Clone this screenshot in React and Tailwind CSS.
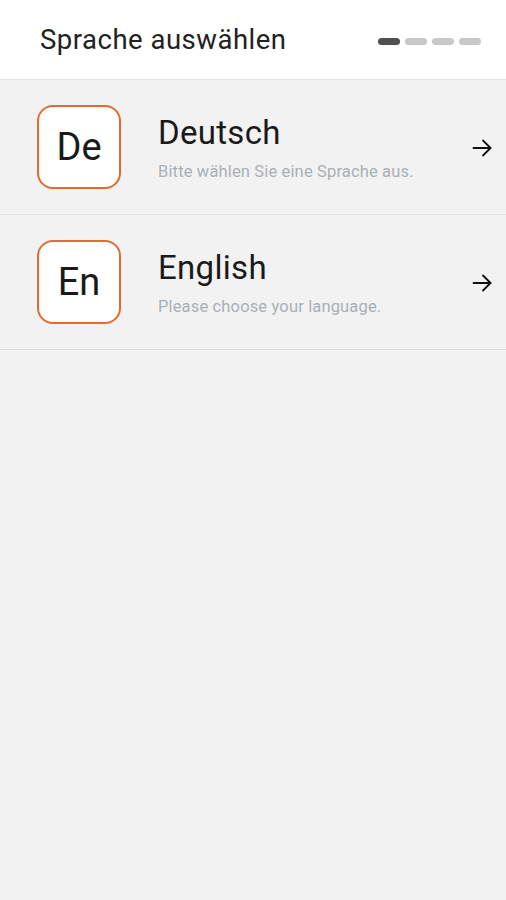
export default function App() {
  const rows = [
    { code: "De", title: "Deutsch", sub: "Bitte wählen Sie eine Sprache aus.", border: "border-[#e3e3e3]" },
    { code: "En", title: "English", sub: "Please choose your language.", border: "border-[#d6dfe6]" },
  ];
  return (
    <div className="min-h-[900px] w-full bg-[#f2f2f2]" style={{ fontFamily: "Roboto, 'Noto Sans', sans-serif" }}>
      <div className="flex h-[80px] items-center justify-between border-b border-[#e2e2e2] bg-white pl-[40px] pr-[25px]">
        <div className="text-[27.5px] leading-[30px] tracking-[0.5px] text-[#222]">Sprache auswählen</div>
        <div className="mt-[4px] flex items-center gap-[5px]">
          <span className="h-[7px] w-[22px] rounded-full bg-[#505050]"></span>
          <span className="h-[7px] w-[22px] rounded-full bg-[#c8c8c8]"></span>
          <span className="h-[7px] w-[22px] rounded-full bg-[#c8c8c8]"></span>
          <span className="h-[7px] w-[22px] rounded-full bg-[#c8c8c8]"></span>
        </div>
      </div>
      {rows.map((r) => (
        <div key={r.code} className={`flex h-[135px] items-center border-b ${r.border} pl-[37px] pr-[14px]`}>
          <div className="flex h-[84px] w-[84px] shrink-0 items-center justify-center rounded-[16px] border-2 border-[#e8692d] bg-white text-[38px] leading-none text-[#1a1a1a]">
            {r.code}
          </div>
          <div className="ml-[37px] flex flex-1 flex-col">
            <div className="mt-[2px] text-[33px] leading-[38px] tracking-[0.3px] text-[#1a1a1a]">{r.title}</div>
            <div className="mt-[10px] text-[16.5px] leading-[20px] tracking-[0.15px] text-[#a9b0b5]">{r.sub}</div>
          </div>
          <svg width="20" height="18" viewBox="0 0 20 18" fill="none" stroke="#111" strokeWidth="1.8" strokeLinecap="round" strokeLinejoin="round" className="mt-[2px]">
            <path d="M1.5 9H18.5" />
            <path d="M11 1.5L18.5 9L11 16.5" />
          </svg>
        </div>
      ))}
    </div>
  );
}
